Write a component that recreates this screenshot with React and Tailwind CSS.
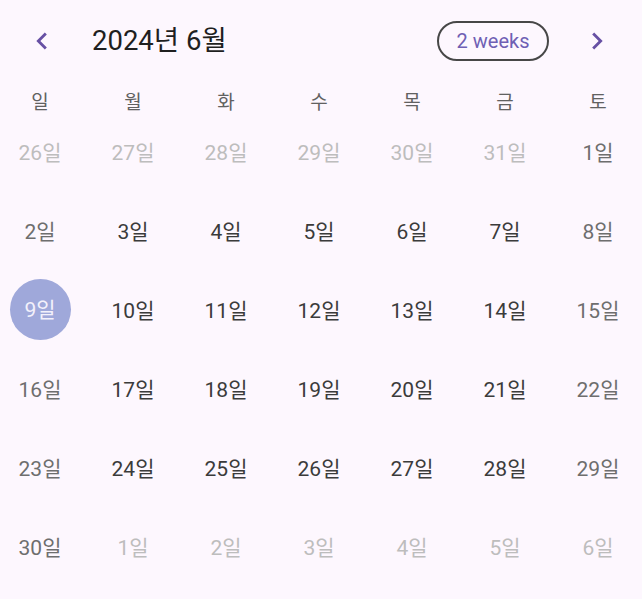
import React from "react";

const WEEKDAYS = ["일", "월", "화", "수", "목", "금", "토"];

// 6 weeks of June 2024, leading/trailing days from May and July
const buildDays = () => {
  const days = [];
  for (let d = 26; d <= 31; d++) days.push({ n: d, outside: true });
  for (let d = 1; d <= 30; d++) days.push({ n: d, outside: false });
  for (let d = 1; d <= 6; d++) days.push({ n: d, outside: true });
  return days;
};

function Chevron({ dir }) {
  return (
    <svg width="34" height="34" viewBox="0 0 24 24" fill="#6750a4">
      {dir === "left" ? (
        <path d="M15.41 7.41L14 6l-6 6 6 6 1.41-1.41L10.83 12z" />
      ) : (
        <path d="M10 6L8.59 7.41 13.17 12l-4.58 4.59L10 18l6-6z" />
      )}
    </svg>
  );
}

export default function App() {
  const days = buildDays();

  return (
    <div
      className="w-[642px] h-[599px] bg-[#fdf7fe] overflow-hidden"
      style={{ fontFamily: "Roboto, 'Noto Sans CJK KR', sans-serif" }}
    >
      <div className="h-[81px] flex items-center">
        <div className="ml-[25px] w-[34px] h-[34px]">
          <Chevron dir="left" />
        </div>
        <div className="ml-[33px] text-[27.5px] text-[#1f1f1f] leading-none">
          2024년 6월
        </div>
        <div className="flex-1" />
        <div className="w-[112px] h-[40px] rounded-full border-2 border-[#474747] flex items-center justify-center text-[20px] text-[#6f5fb4]">
          2 weeks
        </div>
        <div className="ml-[31px] mr-[28px] w-[34px] h-[34px]">
          <Chevron dir="right" />
        </div>
      </div>

      <div className="grid grid-cols-[repeat(7,80px)] gap-x-[13px] h-[40px] items-center">
        {WEEKDAYS.map(w => (
          <div key={w} className="pt-[4px] text-center text-[19px] text-[#616161]">
            {w}
          </div>
        ))}
      </div>

      <div className="grid grid-cols-[repeat(7,80px)] gap-x-[13px] gap-y-[18px]">
        {days.map((day, i) => {
          const col = i % 7;
          const weekend = col === 0 || col === 6;
          const selected = !day.outside && day.n === 9;
          let color = "text-[#3b3b3b]";
          if (day.outside) color = "text-[#bdbdbd]";
          else if (weekend) color = "text-[#6e6e6e]";

          return (
            <div key={i} className="h-[61px] flex items-center justify-center">
              {selected ? (
                <div className="w-[61px] h-[61px] rounded-full bg-[#9fa8da] flex items-center justify-center text-[21px] text-[#f3f1fb]">
                  <span className="pt-[3px]">{day.n}일</span>
                </div>
              ) : (
                <div className={`pt-[4px] text-[21px] ${color}`}>{day.n}일</div>
              )}
            </div>
          );
        })}
      </div>
    </div>
  );
}
